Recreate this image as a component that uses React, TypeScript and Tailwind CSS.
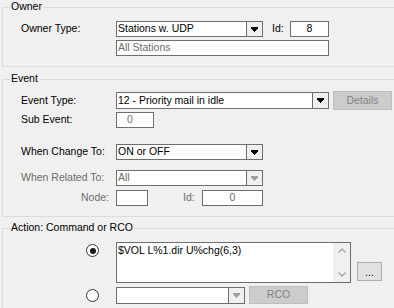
import React from "react";

function GroupBox({ title, className, children }: { title: string; className?: string; children: React.ReactNode }) {
  return (
    <div className={"relative border border-[#dcdcdc] w-[404px] " + (className || "")}>
      <span className="absolute top-[-8px] left-[7px] px-[1px] bg-[#f0f0f0] leading-[13px]">{title}</span>
      {children}
    </div>
  );
}

function Arrow({ disabled }: { disabled?: boolean }) {
  return (
    <svg width="7" height="5" viewBox="0 0 7 5" shapeRendering="crispEdges" fill={disabled ? "#a0a0a0" : "#000"}>
      <rect x="0" y="0" width="7" height="2" />
      <rect x="1" y="2" width="5" height="1" />
      <rect x="2" y="3" width="3" height="1" />
      <rect x="3" y="4" width="1" height="1" />
    </svg>
  );
}

function Combo({ value, width, height, disabled }: { value: string; width: string; height: string; disabled?: boolean }) {
  return (
    <div className={"flex bg-white border border-[#6e6e6e] " + width + " " + height}>
      <div className={"flex-1 flex items-center pl-[1px] " + (disabled ? "text-[#6d6d6d]" : "text-black")}>{value}</div>
      <div className="w-[16px] border-l border-[#6e6e6e] bg-[#f0f0f0] flex items-center justify-center">
        <Arrow disabled={disabled} />
      </div>
    </div>
  );
}

function Radio({ checked }: { checked?: boolean }) {
  return (
    <div className="w-[13px] h-[13px] rounded-full border border-[#333333] bg-white flex items-center justify-center">
      {checked && <div className="w-[6px] h-[6px] rounded-full bg-[#1a1a1a]" />}
    </div>
  );
}

function Chevron({ up }: { up?: boolean }) {
  return (
    <svg width="8" height="5" viewBox="0 0 8 5" fill="none" stroke="#a3a3a3" strokeWidth="1.3">
      {up ? <path d="M0.5 4.5L4 1L7.5 4.5" /> : <path d="M0.5 0.5L4 4L7.5 0.5" />}
    </svg>
  );
}

export default function App() {
  return (
    <div
      className="w-[394px] h-[308px] overflow-hidden bg-[#f0f0f0] pt-[7px] pl-[2px] text-[10.5px] text-black"
      style={{ fontFamily: '"Liberation Sans", Arial, sans-serif' }}
    >
      <GroupBox title="Owner" className="pt-[13px] pl-[18px] pb-[10px]">
        <div className="flex items-center h-4">
          <div className="w-[95px]">Owner Type:</div>
          <Combo value="Stations w. UDP" width="w-[147px]" height="h-4" />
          <div className="ml-[9px] w-[18px]">Id:</div>
          <div className="w-[39px] h-4 bg-white border border-[#6e6e6e] flex items-center justify-center">8</div>
        </div>
        <div className="flex mt-[3px] h-4">
          <div className="w-[95px]" />
          <div className="w-[213px] h-4 bg-white border border-[#6e6e6e] flex items-center pl-[1px] text-[#6d6d6d]">All Stations</div>
        </div>
      </GroupBox>

      <GroupBox title="Event" className="mt-[12px] pt-[11px] pl-[18px] pb-[10px]">
        <div className="flex items-center h-[19px]">
          <div className="w-[95px]">Event Type:</div>
          <Combo value="12 - Priority mail in idle" width="w-[213px]" height="h-[17px]" />
          <button className="ml-[4px] w-[59px] h-[19px] bg-[#cccccc] border border-[#bfbfbf] text-[#838383]">Details</button>
        </div>
        <div className="flex items-center h-4 mt-[2px]">
          <div className="w-[95px]">Sub Event:</div>
          <div className="w-[38px] h-4 bg-white border border-[#6e6e6e] flex items-center pl-[10px] text-[#6d6d6d]">0</div>
        </div>
        <div className="flex items-center h-4 mt-[16px]">
          <div className="w-[95px]">When Change To:</div>
          <Combo value="ON or OFF" width="w-[147px]" height="h-4" />
        </div>
        <div className="flex items-center h-4 mt-[10px]">
          <div className="w-[95px] text-[#6d6d6d]">When Related To:</div>
          <Combo value="All" width="w-[147px]" height="h-4" disabled />
        </div>
        <div className="flex items-center h-4 mt-[4px]">
          <div className="w-[88px] text-right text-[#6d6d6d]">Node:</div>
          <div className="ml-[7px] w-[32px] h-4 bg-white border border-[#6e6e6e]" />
          <div className="ml-[35px] w-[19px] text-[#6d6d6d]">Id:</div>
          <div className="w-[61px] h-4 bg-white border border-[#6e6e6e] flex items-center justify-center text-[#6d6d6d]">0</div>
        </div>
      </GroupBox>

      <GroupBox title="Action: Command or RCO" className="mt-[11px] pt-[13px] pl-[18px] pb-[10px]">
        <div className="flex items-start">
          <div className="w-[95px] flex justify-end pr-[17px] pt-[2px]">
            <Radio checked />
          </div>
          <div className="w-[235px] h-[41px] bg-white border border-[#6e6e6e] flex">
            <div className="flex-1 pl-[1px] pt-[1px] leading-[12px]">$VOL L%1.dir U%chg(6,3)</div>
            <div className="w-[17px] bg-[#f0f0f0] flex flex-col items-center justify-between py-[5px]">
              <Chevron up />
              <Chevron />
            </div>
          </div>
          <button className="ml-[6px] mt-[20px] w-[25px] h-[19px] bg-[#e1e1e1] border border-[#adadad] leading-[12px]">...</button>
        </div>
        <div className="flex items-end h-[18px] mt-[3px]">
          <div className="w-[95px] h-[17px] flex items-center justify-end pr-[17px]">
            <Radio />
          </div>
          <Combo value="" width="w-[129px]" height="h-[17px]" disabled />
          <button className="ml-[4px] w-[59px] h-[18px] bg-[#cccccc] border border-[#bfbfbf] text-[#838383]">RCO</button>
        </div>
      </GroupBox>
    </div>
  );
}
